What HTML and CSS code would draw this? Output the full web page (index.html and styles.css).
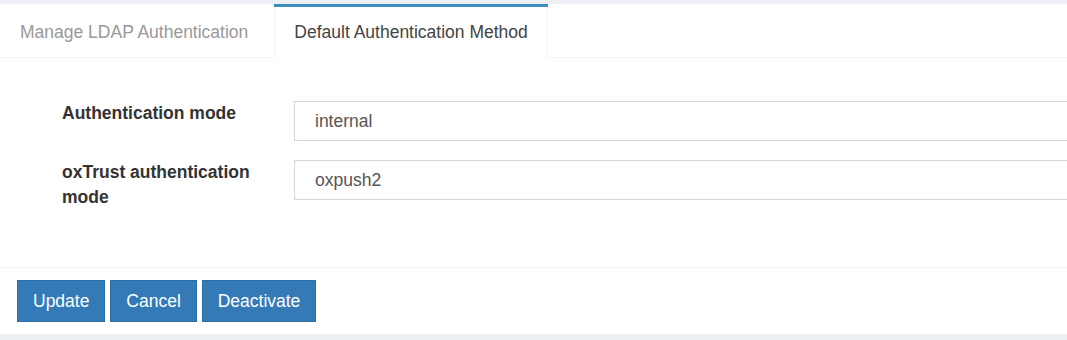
FILE: index.html
```html
<!DOCTYPE html>
<html>
<head>
    <meta name="viewport" content="width=device-width, initial-scale=1.0">
    <link rel="stylesheet" href="styles.css">
</head>
<body>

<div class="box">
    <ul class="tabs">
        <li><a href="#ldap">Manage LDAP Authentication</a></li>
        <li class="active"><a href="#method">Default Authentication Method</a></li>
    </ul>

    <form id="authForm">
        <div class="form-body">
            <div class="form-group">
                <label for="authMode">Authentication mode</label>
                <input type="text" class="form-control" id="authMode" name="authMode" value="internal">
            </div>
            <div class="form-group">
                <label for="oxMode">oxTrust authentication mode</label>
                <input type="text" class="form-control" id="oxMode" name="oxMode" value="oxpush2">
            </div>
        </div>
        <div class="box-footer">
            <button type="button">Update</button>
            <button type="button">Cancel</button>
            <button type="button">Deactivate</button>
        </div>
    </form>
</div>

</body>
</html>
```

FILE: styles.css
```css
* {
    box-sizing: border-box;
}

body {
    margin: 0;
    padding: 4px 0 6px;
    font-family: "Liberation Sans", Arial, sans-serif;
    font-size: 17.5px;
    line-height: 25px;
    color: #333;
    background-color: #ecf0f5;
    overflow: hidden;
}

.box {
    background-color: #ffffff;
    overflow: hidden;
}

.tabs {
    display: flex;
    margin: 0;
    padding: 0;
    list-style: none;
    border-bottom: 1px solid #f4f4f4;
}

.tabs li {
    margin-right: 6px;
    margin-bottom: -1px;
    border-top: 3px solid transparent;
}

.tabs a {
    display: block;
    padding: 12.5px 19px;
    color: #999;
    text-decoration: none;
    border-left: 1px solid transparent;
    border-right: 1px solid transparent;
    border-bottom: 1px solid transparent;
}

.tabs li.active {
    border-top-color: #3c8dbc;
}

.tabs li.active a {
    color: #444;
    background-color: #ffffff;
    border-left-color: #f4f4f4;
    border-right-color: #f4f4f4;
    border-bottom-color: #ffffff;
}

.form-body {
    padding: 43px 0 38px 62px;
}

.form-group {
    display: flex;
    align-items: flex-start;
    margin-bottom: 19px;
}

.form-group label {
    width: 200px;
    margin-right: 32px;
    flex-shrink: 0;
    font-weight: bold;
}

.form-control {
    width: 900px;
    flex-shrink: 0;
    height: 40px;
    margin: 0;
    padding: 0 20px;
    border: 1px solid #d2d6de;
    border-radius: 0;
    font-family: inherit;
    font-size: 17.5px;
    color: #555;
}

.box-footer {
    padding: 12px 17px;
    border-top: 1px solid #f4f4f4;
}

button {
    height: 42px;
    margin: 0;
    padding: 0 15px;
    background-color: #337ab7;
    color: #ffffff;
    border: 1px solid #2e6da4;
    border-radius: 0;
    font-family: inherit;
    font-size: 17.5px;
    cursor: pointer;
}

button:hover {
    opacity: 0.8;
}
```
